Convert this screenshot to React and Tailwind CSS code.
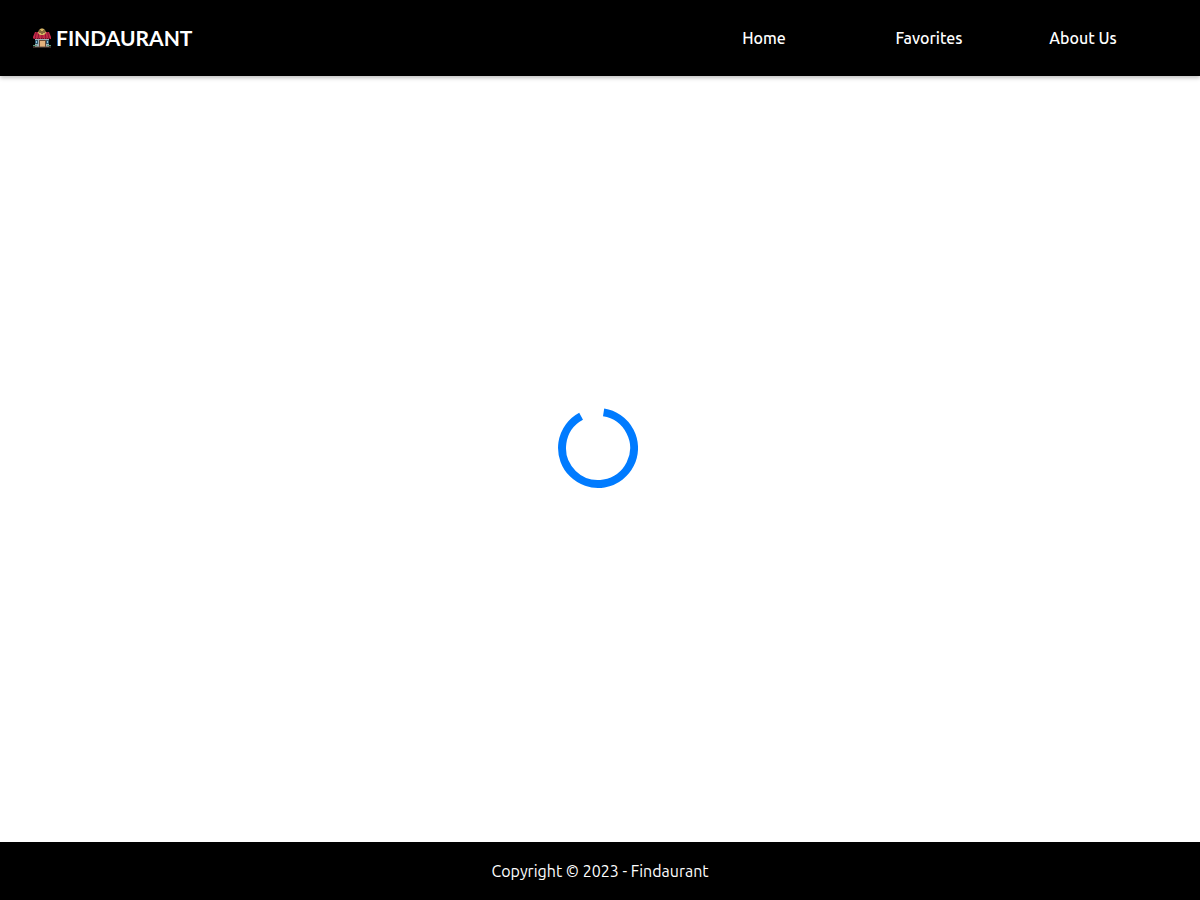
function RestaurantIcon() {
  return (
    <svg viewBox="0 0 20 20" className="size-5" aria-hidden="true">
      <rect x="3" y="10" width="14" height="9" fill="#9fb0b8" />
      <path d="M3 4H17L19 9V11H1V9Z" fill="#c42b49" />
      <path d="M4.5 4L3 11M7 4L6 11M10 4V11M13 4L14 11M15.500 4L17 11" stroke="#8a1831" strokeWidth="1" />
      <path d="M1 10.500H19" stroke="#6d1227" strokeWidth="1" strokeDasharray="1 1" />
      <path d="M6 5L7 2L9 0.500H11L13 2L14 5L12 7H8Z" fill="#d8b765" />
      <path d="M8 2V5M10 3V6M12 2V5" stroke="#352516" strokeWidth="1" />
      <rect x="7" y="12" width="7" height="7" fill="#6b4a35" />
      <rect x="8" y="13" width="5" height="6" fill="#e3b27d" />
      <path d="M3 12H6V16H3ZM14 12H17V16H14Z" fill="#32576b" />
      <path d="M4 13H5V15H4ZM15 13H16V15H15Z" fill="#87c4dd" />
      <path d="M1 17H5V18H1ZM15 17H19V18H15Z" fill="#5b9a7c" />
      <path d="M1 19H19" stroke="#6f5648" strokeWidth="1" />
    </svg>
  );
}

function Spinner() {
  return (
    <svg viewBox="-40 -40 80 80" className="mr-1 size-20" role="img" aria-label="Loading">
      <path d="M5.6 -35.6A36 36 0 1 1 -16.9 -31.8" fill="none" stroke="#007bff" strokeWidth="8" />
    </svg>
  );
}

const links = [
  { label: "Home", width: "w-44" },
  { label: "Favorites", width: "w-[154px]" },
  { label: "About Us", width: "w-[154px]" },
];

export default function App() {
  return (
    <div className="flex min-h-screen flex-col bg-white font-['Ubuntu','Noto_Sans',sans-serif] text-base text-white">
      <header className="flex h-19 items-center justify-between bg-black pr-10 pl-8 shadow-[0_2px_4px_rgba(0,0,0,0.25)]">
        <a href="#home" className="flex items-center gap-1">
          <RestaurantIcon />
          <span className="font-['Lato',sans-serif] text-[21px] font-bold">FINDAURANT</span>
        </a>
        <nav className="flex" aria-label="Main">
          {links.map(({ label, width }) => (
            <a key={label} href="#" className={`${width} text-center font-medium`}>
              {label}
            </a>
          ))}
        </nav>
      </header>
      <main className="flex grow items-center justify-center pb-5.5">
        <Spinner />
      </main>
      <footer className="flex h-14.5 items-center justify-center bg-black">
        <p>Copyright © 2023 - Findaurant</p>
      </footer>
    </div>
  );
}
